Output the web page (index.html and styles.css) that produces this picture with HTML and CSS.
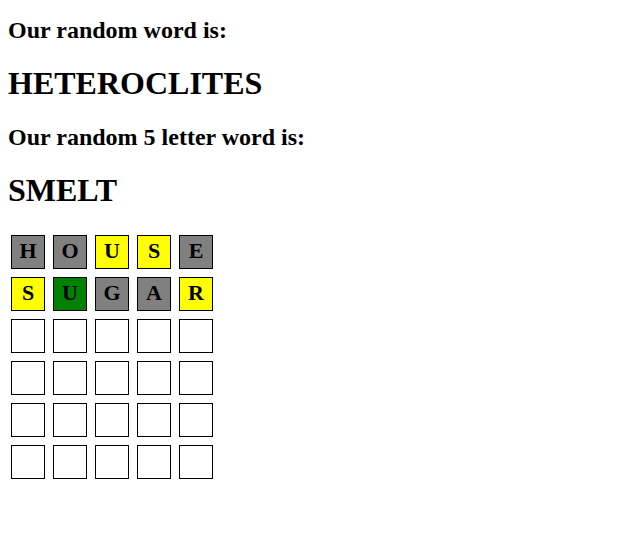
FILE: index.html
```html
<!DOCTYPE html>
<html>
<head>
<meta charset="utf-8">
<link rel="stylesheet" href="styles.css">
</head>
<body>
<h2 class="label first">Our random word is:</h2>
<h1 class="word">HETEROCLITES</h1>
<h2 class="label">Our random 5 letter word is:</h2>
<h1 class="word">SMELT</h1>
<div class="board">
  <div class="tile gray">H</div>
  <div class="tile gray">O</div>
  <div class="tile yellow">U</div>
  <div class="tile yellow">S</div>
  <div class="tile gray">E</div>
  <div class="tile yellow">S</div>
  <div class="tile green">U</div>
  <div class="tile gray">G</div>
  <div class="tile gray">A</div>
  <div class="tile yellow">R</div>
  <div class="tile"></div><div class="tile"></div><div class="tile"></div><div class="tile"></div><div class="tile"></div>
  <div class="tile"></div><div class="tile"></div><div class="tile"></div><div class="tile"></div><div class="tile"></div>
  <div class="tile"></div><div class="tile"></div><div class="tile"></div><div class="tile"></div><div class="tile"></div>
  <div class="tile"></div><div class="tile"></div><div class="tile"></div><div class="tile"></div><div class="tile"></div>
</div>
</body>
</html>
```
FILE: styles.css
```css
html, body {
  background: #ffffff;
}
body {
  margin: 8px;
  font-family: "Liberation Serif", "Times New Roman", serif;
  color: #000000;
}
.label {
  font-size: 24px;
  font-weight: bold;
  margin: 19.92px 0;
}
.label.first {
  margin-top: 9px;
}
.word {
  font-size: 32px;
  font-weight: bold;
  margin: 21.44px 0;
}
.board {
  display: grid;
  grid-template-columns: repeat(5, 34px);
  grid-auto-rows: 34px;
  gap: 8px;
  padding: 4px 3px 1px;
}
.tile {
  box-sizing: border-box;
  border: 1px solid #000000;
  display: flex;
  align-items: center;
  justify-content: center;
  padding-bottom: 2px;
  font-size: 22px;
  font-weight: bold;
  background: #ffffff;
}
.gray { background: #808080; }
.yellow { background: #ffff00; }
.green { background: #008000; }
```
